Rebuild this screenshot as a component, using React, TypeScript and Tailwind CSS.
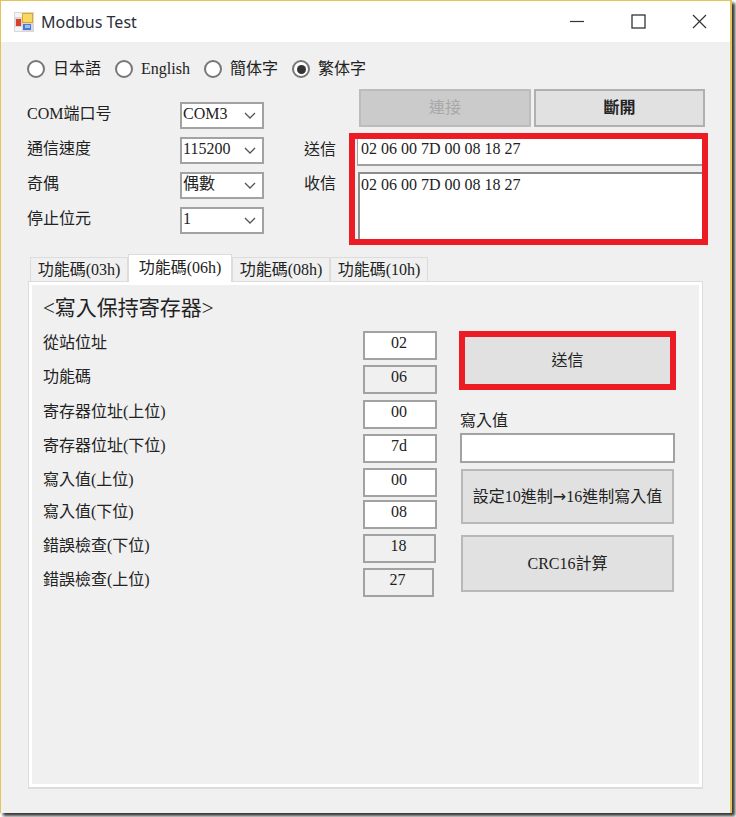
const font = { fontFamily: '"Liberation Serif", "Noto Sans CJK TC", serif' };

function Radio({ label, checked, className }: { label: string; checked?: boolean; className: string }) {
  return (
    <div className={`flex items-center gap-[8px] ${className}`}>
      <div className="w-[18px] h-[18px] rounded-full border-2 border-[#777] bg-white flex items-center justify-center">
        {checked && <div className="w-[9px] h-[9px] rounded-full bg-[#333]" />}
      </div>
      <span className="text-[16px] leading-[18px] text-[#222]">{label}</span>
    </div>
  );
}

function Combo({ label, value }: { label: string; value: string }) {
  return (
    <div className="flex items-start">
      <span className="w-[153px] text-[16px] leading-[23px] text-[#222]">{label}</span>
      <div className="w-[84px] h-[27px] border-2 border-[#a2a2a2] bg-white flex items-center justify-between pl-[1px] pr-[5px]">
        <span className="text-[16px] leading-[18px] text-[#222] -mt-[3px]">{value}</span>
        <svg width="14" height="8" viewBox="0 0 14 8" fill="none" stroke="#555" strokeWidth="1.3">
          <path d="M2 1l5 5 5-5" />
        </svg>
      </div>
    </div>
  );
}

function Field({ label, value, readOnly, width = 'w-[74px]', className = '' }: { label: string; value: string; readOnly?: boolean; width?: string; className?: string }) {
  return (
    <div className={`flex justify-between h-[29px] ${className}`}>
      <span className="text-[16px] leading-[24px] text-[#222]">{label}</span>
      <div className="w-[74px] flex justify-start">
        <div className={`${width} h-[29px] border-2 border-[#a2a2a2] pr-[2px] text-center text-[16px] leading-[20px] text-[#222] ${readOnly ? 'bg-[#f0f0f0]' : 'bg-white'}`}>
          {value}
        </div>
      </div>
    </div>
  );
}

function Tab({ label, active, className }: { label: string; active?: boolean; className: string }) {
  return (
    <div
      className={`flex justify-center text-[16px] text-[#222] border border-b-0 border-[#dcdcdc] ${className} ${
        active ? 'h-[28px] bg-white leading-[26px] relative z-10 -mb-px' : 'h-[24px] bg-[#f0f0f0] leading-[24px]'
      }`}
    >
      {label}
    </div>
  );
}

export default function App() {
  return (
    <div className="w-[736px] h-[817px] bg-white overflow-hidden" style={font}>
      <div className="w-[732px] h-[813px] flex flex-col bg-[#f0f0f0] border-l border-t border-r-2 border-[#e2c45a] shadow-[3px_3px_3px_rgba(0,0,0,0.8)]">
        {/* Title bar */}
        <div className="h-[41px] shrink-0 bg-white flex items-center">
          <svg className="ml-[13px]" width="20" height="20" viewBox="0 0 20 20">
            <rect x="0" y="0" width="20" height="20" fill="#d8d8d8" />
            <rect x="1" y="1" width="7" height="4" fill="#f4f4f4" />
            <rect x="1" y="15" width="7" height="4" fill="#f4f4f4" />
            <rect x="2" y="7" width="5" height="7" fill="#d8402c" />
            <rect x="8" y="1" width="11" height="10" fill="#e0a820" />
            <rect x="9" y="2" width="9" height="8" fill="#f7d860" />
            <rect x="9" y="12" width="8" height="6" fill="#4a78d8" />
            <rect x="11" y="13" width="5" height="3" fill="#9cc0f0" />
          </svg>
          <span className="ml-[7px] text-[16px] text-[#2a2f38]" style={{ fontFamily: '"Noto Sans", sans-serif' }}>
            Modbus Test
          </span>
          <div className="ml-auto flex items-center">
            <div className="w-[61px] flex justify-center">
              <svg width="15" height="15" viewBox="0 0 15 15" stroke="#333" strokeWidth="1.2" fill="none">
                <path d="M0 7.5h14" />
              </svg>
            </div>
            <div className="w-[61px] flex justify-center">
              <svg width="15" height="15" viewBox="0 0 15 15" stroke="#333" strokeWidth="1.3" fill="none">
                <rect x="1" y="1" width="13" height="13" />
              </svg>
            </div>
            <div className="w-[61px] flex justify-center">
              <svg width="15" height="15" viewBox="0 0 15 15" stroke="#333" strokeWidth="1.2" fill="none">
                <path d="M1 1l13 13M14 1L1 14" />
              </svg>
            </div>
          </div>
        </div>

        {/* Language radios */}
        <div className="flex items-center mt-[18px] ml-[26px] h-[18px]">
          <Radio label="日本語" className="w-[88px]" />
          <Radio label="English" className="w-[89px]" />
          <Radio label="簡体字" className="w-[88px]" />
          <Radio label="繁体字" checked className="w-[88px]" />
        </div>

        {/* Port settings + connection */}
        <div className="flex mt-[11px] ml-[26px]">
          <div className="w-[237px] mt-[13px] flex flex-col gap-[8px]">
            <Combo label="COM端口号" value="COM3" />
            <Combo label="通信速度" value="115200" />
            <Combo label="奇偶" value="偶數" />
            <Combo label="停止位元" value="1" />
          </div>
          <div className="ml-[40px] w-[45px] mt-[50px] text-[16px] leading-[22px] text-[#222]">
            <div>送信</div>
            <div className="mt-[12px]">收信</div>
          </div>
          <div className="w-[359px]">
            <div className="flex gap-[3px] ml-[10px] h-[38px]">
              <div className="w-[172px] bg-[#cbcbcb] border-2 border-[#bcbcbc] flex items-center justify-center text-[16px] text-[#a8a8a8]">
                連接
              </div>
              <div className="w-[171px] bg-[#e1e1e1] border-2 border-[#b0b0b0] flex items-center justify-center text-[16px] font-bold text-[#222]">
                斷開
              </div>
            </div>
            <div className="mt-[6px] h-[112px] border-[6px] border-[#ed1c24] flex flex-col bg-[#f0f0f0]">
              <div className="h-[27px] ml-[2px] bg-white border-l border-b-2 border-[#a0a0a0] pl-[3px] text-[16px] leading-[20px] text-[#222]">
                02 06 00 7D 00 08 18 27
              </div>
              <div className="mt-[6px] flex-1 ml-[3px] bg-white border-l-2 border-t-2 border-[#8c8c8c] pl-[1px] pt-[1px] text-[16px] leading-[20px] text-[#222]">
                02 06 00 7D 00 08 18 27
              </div>
            </div>
          </div>
        </div>

        {/* Function code tabs */}
        <div className="flex items-end ml-[29px] mt-[9px] h-[27px]">
          <Tab label="功能碼(03h)" className="w-[98px]" />
          <Tab label="功能碼(06h)" active className="w-[104px]" />
          <Tab label="功能碼(08h)" className="w-[98px]" />
          <Tab label="功能碼(10h)" className="w-[98px]" />
        </div>
        <div className="ml-[27px] w-[675px] h-[508px] border border-[#dcdcdc] border-b-2">
          <div className="h-full border-[3px] border-white flex pl-[11px]">
            <div className="w-[394px]">
              <div className="h-[46px] pt-[9px] text-[21px] leading-[28px] text-[#222]">&lt;寫入保持寄存器&gt;</div>
              <Field label="從站位址" value="02" />
              <Field label="功能碼" value="06" readOnly className="mt-[5px]" />
              <Field label="寄存器位址(上位)" value="00" className="mt-[6px]" />
              <Field label="寄存器位址(下位)" value="7d" className="mt-[5px]" />
              <Field label="寫入值(上位)" value="00" className="mt-[5px]" />
              <Field label="寫入值(下位)" value="08" className="mt-[3px]" />
              <Field label="錯誤檢查(下位)" value="18" readOnly width="w-[73px]" className="mt-[5px]" />
              <Field label="錯誤檢查(上位)" value="27" readOnly width="w-[71px]" className="mt-[5px]" />
            </div>
            <div className="ml-[22px] pt-[46px] w-[217px]">
              <div className="h-[59px] border-[6px] border-[#ed1c24]">
                <div className="h-full bg-[#e1e1e1] flex items-center justify-center text-[16px] text-[#222]">送信</div>
              </div>
              <div className="mt-[19px] ml-px text-[16px] leading-[24px] text-[#222]">寫入值</div>
              <div className="ml-px w-[215px] h-[30px] bg-white border-2 border-[#a2a2a2]" />
              <div className="mt-[6px] ml-[2px] w-[213px] h-[55px] bg-[#e1e1e1] border-2 border-[#b8b8b8] flex items-center justify-center text-[16px] text-[#222]">
                設定10進制<span className="font-['DejaVu_Sans']">→</span>16進制寫入值
              </div>
              <div className="mt-[11px] ml-[2px] w-[213px] h-[57px] bg-[#e1e1e1] border-2 border-[#b8b8b8] flex items-center justify-center text-[16px] text-[#222]">
                CRC16計算
              </div>
            </div>
          </div>
        </div>
      </div>
    </div>
  );
}
